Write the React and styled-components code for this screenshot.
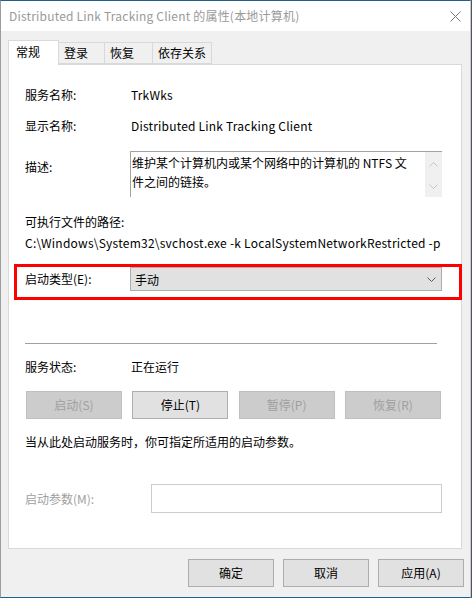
import React from 'react';
import styled, { createGlobalStyle } from 'styled-components';

const FONT = `'Noto Sans CJK SC', 'Noto Sans', sans-serif`;

const GlobalStyle = createGlobalStyle`
    html, body {
        margin: 0;
        padding: 0;
        background: #4b5661;
    }
    body {
        font-family: ${FONT};
        font-size: 12px;
        color: #000;
    }
`;

const TABS = [
    { label: '常规', width: 51, active: true },
    { label: '登录', width: 47 },
    { label: '恢复', width: 49 },
    { label: '依存关系', width: 60 },
];

export default function App() {
    return (
        <>
            <GlobalStyle />
            <StyledWindow>
                <StyledTitleBar>
                    <StyledTitle>Distributed Link Tracking Client 的属性(本地计算机)</StyledTitle>
                    <StyledClose aria-label="关闭">
                        <svg width="11" height="11" viewBox="0 0 11 11">
                            <path d="M0.5 0.5 L10.5 10.5 M10.5 0.5 L0.5 10.5" stroke="#7a7a7a" strokeWidth="1" />
                        </svg>
                    </StyledClose>
                </StyledTitleBar>

                <StyledBody>
                    <StyledTabs>
                        {TABS.map((tab) => (
                            <StyledTab key={tab.label} $active={tab.active} $width={tab.width}>
                                {tab.label}
                            </StyledTab>
                        ))}
                    </StyledTabs>

                    <StyledPanel>
                        <StyledField>
                            <StyledLabel>服务名称:</StyledLabel>
                            <StyledValue>TrkWks</StyledValue>
                        </StyledField>
                        <StyledField $gap={15}>
                            <StyledLabel>显示名称:</StyledLabel>
                            <StyledValue>Distributed Link Tracking Client</StyledValue>
                        </StyledField>
                        <StyledField $gap={17} $top>
                            <StyledLabel $pad={8}>描述:</StyledLabel>
                            <StyledMemo>
                                <StyledMemoText>
                                    维护某个计算机内或某个网络中的计算机的 NTFS 文件之间的链接。
                                </StyledMemoText>
                                <StyledScrollbar>
                                    <Chevron dir="up" color="#c4c4c4" />
                                    <Chevron dir="down" color="#c4c4c4" />
                                </StyledScrollbar>
                            </StyledMemo>
                        </StyledField>

                        <StyledText $gap={17}>可执行文件的路径:</StyledText>
                        <StyledText $gap={5} $spaced>
                            C:\Windows\System32\svchost.exe -k LocalSystemNetworkRestricted -p
                        </StyledText>

                        <StyledHighlight>
                            <StyledLabel $width={105}>启动类型(E):</StyledLabel>
                            <StyledSelect>
                                <span>手动</span>
                                <Chevron dir="down" color="#5a5a5a" />
                            </StyledSelect>
                        </StyledHighlight>

                        <StyledSeparator />

                        <StyledField $gap={15}>
                            <StyledLabel>服务状态:</StyledLabel>
                            <span>正在运行</span>
                        </StyledField>

                        <StyledButtonRow>
                            <StyledButton disabled>启动(S)</StyledButton>
                            <StyledButton>停止(T)</StyledButton>
                            <StyledButton disabled>暂停(P)</StyledButton>
                            <StyledButton disabled>恢复(R)</StyledButton>
                        </StyledButtonRow>

                        <StyledText $gap={15}>当从此处启动服务时，你可指定所适用的启动参数。</StyledText>

                        <StyledParamRow>
                            <StyledLabel $width={126} $muted>启动参数(M):</StyledLabel>
                            <StyledInput disabled />
                        </StyledParamRow>
                    </StyledPanel>

                    <StyledFooter>
                        <StyledButton $footer>确定</StyledButton>
                        <StyledButton $footer>取消</StyledButton>
                        <StyledButton $footer>应用(A)</StyledButton>
                    </StyledFooter>
                </StyledBody>
            </StyledWindow>
        </>
    );
}

const Chevron = ({ dir, color }) => (
    <svg width="9" height="5" viewBox="0 0 9 5">
        <path
            d={dir === 'up' ? 'M0.5 4.5 L4.5 0.5 L8.5 4.5' : 'M0.5 0.5 L4.5 4.5 L8.5 0.5'}
            fill="none"
            stroke={color}
            strokeWidth="1"
        />
    </svg>
);

const StyledWindow = styled.div`
    box-sizing: border-box;
    width: 471px;
    height: 598px;
    display: flex;
    flex-direction: column;
    background: #f0f0f0;
    border-top: 1px solid #1d5f8e;
    border-bottom: 1px solid #1d5f8e;
    border-left: 1px solid #9c9c9c;
    border-right: 1px solid #c8c8c8;
`;

const StyledTitleBar = styled.div`
    height: 30px;
    flex: none;
    display: flex;
    align-items: center;
    justify-content: space-between;
    padding: 0 9px 0 8px;
    background: #fff;
`;

const StyledTitle = styled.div`
    font-size: 12px;
    line-height: 16px;
    letter-spacing: 0.2px;
    color: #9a9a9a;
`;

const StyledClose = styled.div`
    display: flex;
    width: 11px;
    height: 11px;
`;

const StyledBody = styled.div`
    flex: 1;
    display: flex;
    flex-direction: column;
    padding: 9px 8px 0 7px;
`;

const StyledTabs = styled.div`
    display: flex;
    align-items: flex-end;
    height: 24px;
`;

const StyledTab = styled.div`
    box-sizing: border-box;
    position: relative;
    z-index: ${(p) => (p.$active ? 1 : 0)};
    width: ${(p) => p.$width}px;
    height: ${(p) => (p.$active ? 25 : 22)}px;
    margin: 0 0 ${(p) => (p.$active ? -1 : 0)}px ${(p) => (p.$active ? 0 : -1)}px;
    padding: ${(p) => (p.$active ? '3px 0 0 7px' : '2px 0 0 5px')};
    line-height: 16px;
    white-space: nowrap;
    background: ${(p) => (p.$active ? '#fff' : '#f0f0f0')};
    border: 1px solid #d9d9d9;
    border-bottom: ${(p) => (p.$active ? 'none' : '1px solid #d9d9d9')};
`;

const StyledPanel = styled.div`
    box-sizing: border-box;
    height: 485px;
    display: flex;
    flex-direction: column;
    padding: 22px 0 0 16px;
    background: #fff;
    border: 1px solid #d9d9d9;
`;

const StyledField = styled.div`
    display: flex;
    align-items: ${(p) => (p.$top ? 'flex-start' : 'center')};
    margin-top: ${(p) => p.$gap || 0}px;
    line-height: 16px;
`;

const StyledLabel = styled.div`
    flex: none;
    width: ${(p) => p.$width || 106}px;
    padding-top: ${(p) => p.$pad || 0}px;
    line-height: 16px;
    color: ${(p) => (p.$muted ? '#a0a0a0' : '#000')};
`;

const StyledValue = styled.span`
    letter-spacing: 0.2px;
`;

const StyledText = styled.div`
    margin-top: ${(p) => p.$gap || 0}px;
    line-height: 16px;
    white-space: nowrap;
    letter-spacing: ${(p) => (p.$spaced ? '0.24px' : 'normal')};
`;

const StyledMemo = styled.div`
    box-sizing: border-box;
    width: 312px;
    height: 46px;
    margin-left: -1px;
    display: flex;
    border-top: 1px solid #a3a3a3;
    border-left: 1px solid #a3a3a3;
`;

const StyledMemoText = styled.div`
    flex: 1;
    padding: 1px 9px 0 1px;
    line-height: 19px;
`;

const StyledScrollbar = styled.div`
    box-sizing: border-box;
    width: 17px;
    display: flex;
    flex-direction: column;
    align-items: center;
    justify-content: space-between;
    padding: 10px 0 8px;
    background: #f0f0f0;
`;

const StyledHighlight = styled.div`
    box-sizing: border-box;
    display: flex;
    align-items: center;
    width: 448px;
    margin: 13px 0 0 -11px;
    padding: 0 0 6px 8px;
    border: 3px solid #ff0000;
`;

const StyledSelect = styled.div`
    box-sizing: border-box;
    width: 312px;
    height: 24px;
    display: flex;
    align-items: center;
    justify-content: space-between;
    padding: 0 5px 0 4px;
    background: #e1e1e1;
    border: 1px solid #adadad;
`;

const StyledSeparator = styled.div`
    width: 412px;
    height: 1px;
    margin-top: 43px;
    background: #a0a0a0;
`;

const StyledButtonRow = styled.div`
    display: flex;
    justify-content: space-between;
    width: 415px;
    margin: 16px 0 0 1px;
`;

const StyledButton = styled.button`
    box-sizing: border-box;
    width: ${(p) => (p.$footer ? 86 : 96)}px;
    height: 28px;
    padding: 0;
    font-family: ${FONT};
    font-size: 12px;
    line-height: 16px;
    color: #000;
    background: #e1e1e1;
    border: 1px solid #adadad;
    border-radius: 0;

    &:disabled {
        color: #a0a0a0;
        background: #cccccc;
        border-color: #bfbfbf;
    }
`;

const StyledParamRow = styled.div`
    display: flex;
    align-items: center;
    margin-top: 34px;
    line-height: 16px;
`;

const StyledInput = styled.input`
    box-sizing: border-box;
    width: 291px;
    height: 29px;
    margin: 0;
    background: #fff;
    border: 1px solid #cccccc;
`;

const StyledFooter = styled.div`
    display: flex;
    justify-content: flex-end;
    gap: 9px;
    margin: 10px -2px 0 0;
`;
